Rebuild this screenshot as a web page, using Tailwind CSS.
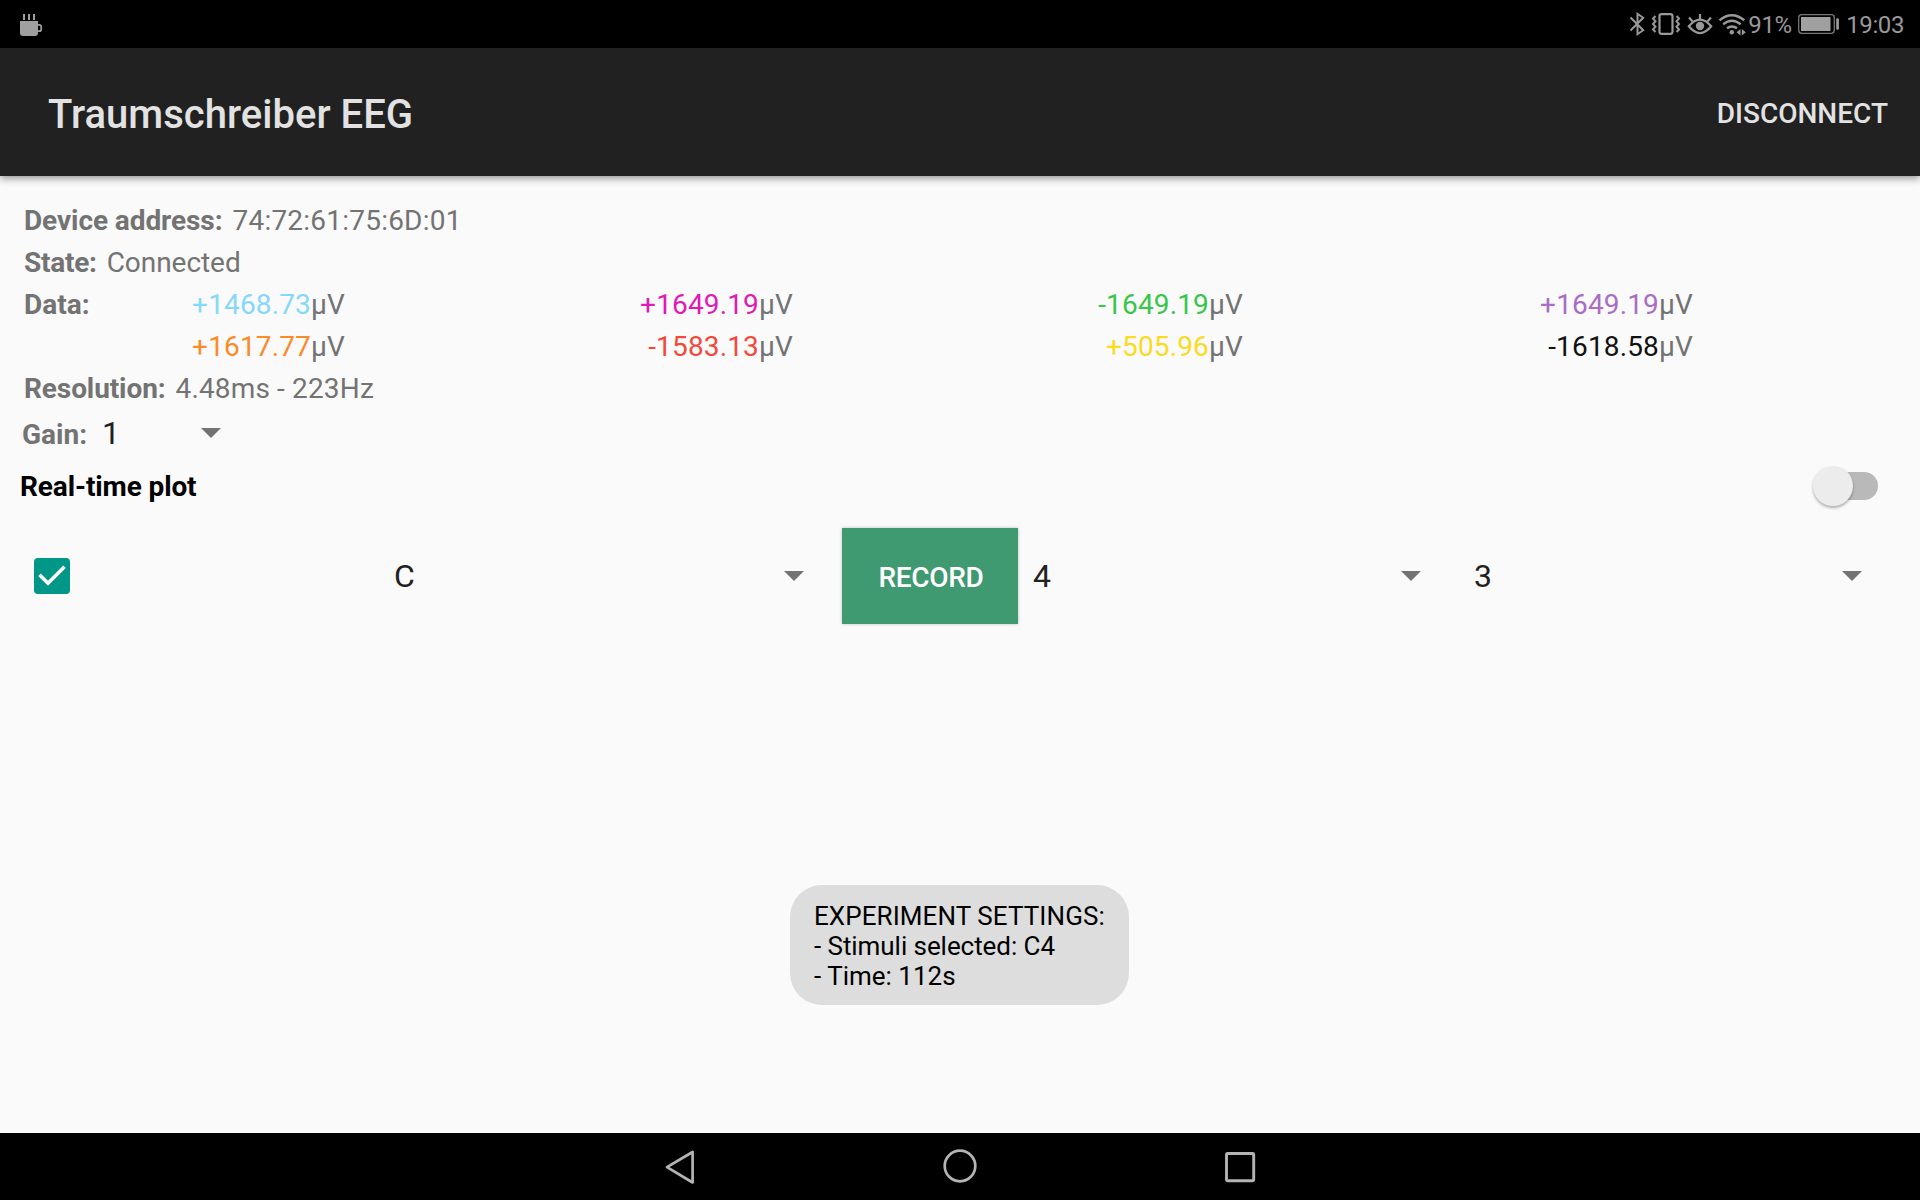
<!DOCTYPE html>
<html lang="en">
<head>
<meta charset="utf-8">
<title>Traumschreiber EEG</title>
<script src="https://cdn.jsdelivr.net/npm/@tailwindcss/browser@4"></script>
</head>
<body class="bg-[#fafafa]">
<div class="relative flex h-[1200px] w-[1920px] flex-col overflow-hidden bg-[#fafafa] font-[Roboto,sans-serif] text-[28px] leading-[42px] text-[#737373]">

  <!-- Status bar -->
  <div class="flex h-12 shrink-0 items-center justify-between bg-black text-[24px] leading-12 text-[#999]">
    <svg class="ml-5 h-12 w-6" viewBox="0 0 24 48" fill="#a0a0a0">
      <path d="M3 14h2v6H3zM8 14h2v6H8zM13 14h2v6h-2z"/>
      <path d="M0 21h18v12a3 3 0 0 1-3 3H3a3 3 0 0 1-3-3z"/>
      <path d="M18 24.800h1.200a2 2 0 0 1 2 2v2.400a2 2 0 0 1-2 2H18" fill="none" stroke="#a0a0a0" stroke-width="1.700"/>
    </svg>
    <div class="flex h-12 items-center">
      <svg class="h-12 w-[22px]" viewBox="1626 0 22 48" fill="none" stroke="#999" stroke-width="2">
        <path d="M1630.500 17.500l12.700 12.700-5.700 4V13.800l5.700 4-12.700 12.700"/>
      </svg>
      <svg class="h-12 w-9" viewBox="1648 0 36 48" fill="none" stroke="#999">
        <rect x="1659.500" y="14.200" width="13" height="19.600" rx="2" stroke-width="2.200"/>
        <path d="M1655.500 16l-2.500 2.600 2.500 2.700-2.500 2.700 2.500 2.700-2.500 2.700 2.500 2.600M1676.500 16l2.500 2.600-2.500 2.700 2.500 2.700-2.500 2.700 2.500 2.700-2.500 2.600" stroke-width="2"/>
      </svg>
      <svg class="h-12 w-8" viewBox="1684 0 32 48" fill="none" stroke="#999" stroke-width="2.200">
        <path d="M1688.800 26.300q11.200-13.400 22.400 0q-11.200 13.600-22.400 0z"/>
        <circle cx="1700" cy="26" r="4.200" fill="#999" stroke="none"/>
        <path d="M1700 14v5M1689 17.500l3.600 4M1711 17.500l-3.600 4"/>
      </svg>
      <svg class="h-12 w-8" viewBox="1716 0 32 48" fill="none" stroke="#999" stroke-width="2.400">
        <path d="M1719.500 20.300q12.300-10.200 24.800 0M1723.200 24.300q8.700-7 17.400 0M1727 28.300q5-3.800 10 0"/>
        <circle cx="1731.800" cy="32.300" r="2.200" fill="#999" stroke="none"/>
        <path d="M1740.500 29v6.500l-4-3.200zM1741.800 29v6.500l4-3.200z" fill="#999" stroke="none"/>
      </svg>
      <span class="w-[50px] pt-0.5 tracking-[-0.3px]">91%</span>
      <svg class="h-12 w-11" viewBox="1798 0 44 48">
        <rect x="1798.700" y="14.700" width="35.600" height="18.600" rx="3" fill="none" stroke="#777" stroke-width="1.300"/>
        <rect x="1801" y="17" width="29.500" height="14" fill="#a0a0a0"/>
        <rect x="1836.200" y="18.300" width="2.700" height="11.400" rx="1" fill="#999"/>
      </svg>
      <span class="mr-[16px] ml-1 pt-0.5 tracking-[-0.4px]">19:03</span>
    </div>
  </div>

  <!-- App bar -->
  <header class="z-10 flex h-32 shrink-0 items-center justify-between bg-[#212121] pr-8 pl-12 font-medium text-[#e2e2e2] shadow-[0_2px_8px_rgba(0,0,0,0.45)]">
    <h1 class="pt-[5px] text-[40px] tracking-[0.03px]">Traumschreiber EEG</h1>
    <button class="pt-1">DISCONNECT</button>
  </header>

  <!-- Content -->
  <main class="flex grow flex-col pt-6">
    <section class="pl-6">
      <div class="flex gap-[10px]"><b class="tracking-[-0.08px]">Device address:</b><span class="tracking-[0.22px]">74:72:61:75:6D:01</span></div>
      <div class="flex gap-[10px]"><b class="tracking-[-0.25px]">State:</b><span class="tracking-[-0.05px]">Connected</span></div>
      <div class="flex">
        <b class="w-[121px]">Data:</b>
        <div class="grid grid-cols-[200px_448px_450px_450px] text-right tracking-[0.15px]">
          <div><span class="text-[#86d8fa]">+1468.73</span>µV</div>
          <div><span class="text-[#e01ab5]">+1649.19</span>µV</div>
          <div><span class="text-[#37c649]">-1649.19</span>µV</div>
          <div><span class="text-[#a96cc8]">+1649.19</span>µV</div>
          <div><span class="text-[#f98b2b]">+1617.77</span>µV</div>
          <div><span class="text-[#f2493d]">-1583.13</span>µV</div>
          <div><span class="text-[#fadb22]">+505.96</span>µV</div>
          <div><span class="text-[#111]">-1618.58</span>µV</div>
        </div>
      </div>
      <div class="flex gap-[10px]"><b class="tracking-[-0.1px]">Resolution:</b><span class="tracking-[0.15px]">4.48ms - 223Hz</span></div>
    </section>

    <div class="flex h-[46px] items-center pl-[22px]">
      <b class="mt-1 w-[80px]">Gain:</b>
      <span class="w-[99px] text-[32px] text-[#212121]">1</span>
      <svg class="h-[10px] w-5" viewBox="0 0 20 10" fill="#737373"><path d="M0 0h20L10 10z"/></svg>
    </div>

    <div class="mb-[10px] flex h-[62px] items-center justify-between pr-[42px] pl-5 text-black">
      <b class="tracking-[-0.12px]">Real-time plot</b>
      <div class="mb-0.5 flex h-10 w-[65px] items-center">
        <div class="z-10 size-10 shrink-0 rounded-full bg-[#ececec] shadow-[0_2px_3px_rgba(0,0,0,0.3)]"></div>
        <div class="-ml-[26px] h-7 w-[51px] rounded-r-full bg-[#b9b9b9]"></div>
      </div>
    </div>

    <div class="flex h-24 items-center text-[32px] text-[#212121]">
      <svg class="mr-[323px] ml-[34px] size-9" viewBox="0 0 36 36">
        <rect width="36" height="36" rx="4" fill="#009688"/>
        <path d="M5.500 16.800l8.500 8.500L30.500 8.800" fill="none" stroke="#fff" stroke-width="3.600"/>
      </svg>
      <div class="flex w-[411px] items-center justify-between"><span class="pl-px">C</span>
        <svg class="h-[10px] w-5" viewBox="0 0 20 10" fill="#737373"><path d="M0 0h20L10 10z"/></svg>
      </div>
      <button class="ml-[38px] h-24 w-[176px] bg-[#3f9971] pt-[3px] pl-0.5 text-[28px] font-medium tracking-[-0.35px] text-white shadow-[0_0_3px_rgba(0,0,0,0.25)]">RECORD</button>
      <div class="ml-[15px] flex w-[388px] items-center justify-between">4
        <svg class="h-[10px] w-5" viewBox="0 0 20 10" fill="#737373"><path d="M0 0h20L10 10z"/></svg>
      </div>
      <div class="ml-[53px] flex w-[388px] items-center justify-between">3
        <svg class="h-[10px] w-5" viewBox="0 0 20 10" fill="#737373"><path d="M0 0h20L10 10z"/></svg>
      </div>
    </div>
  </main>

  <!-- Toast -->
  <div class="absolute top-[885px] left-[790px] h-[120px] w-[339px] rounded-[32px] bg-[#ddd] px-6 py-4 text-[26px] leading-[30px] whitespace-nowrap text-black">
    <p class="tracking-[0.08px]">EXPERIMENT SETTINGS:</p>
    <p class="tracking-[-0.06px]">- Stimuli selected: C4</p>
    <p>- Time: 112s</p>
  </div>

  <!-- Navigation bar -->
  <nav class="flex h-[67px] shrink-0 items-center justify-center gap-60 bg-black pb-0.5">
    <svg class="h-10 w-10" viewBox="660 1146 40 40" fill="none" stroke="#b4b4b4" stroke-width="2.700" stroke-linejoin="round"><path d="M692.600 1152v30.500L667 1167.200z"/></svg>
    <svg class="h-10 w-10" viewBox="940 1146 40 40" fill="none" stroke="#b4b4b4" stroke-width="2.700"><circle cx="960" cy="1166" r="15.300"/></svg>
    <svg class="h-10 w-10" viewBox="1220 1146 40 40" fill="none" stroke="#b4b4b4" stroke-width="2.900"><rect x="1226.500" y="1153.500" width="27.200" height="27.200" rx="1"/></svg>
  </nav>
</div>
</body>
</html>
